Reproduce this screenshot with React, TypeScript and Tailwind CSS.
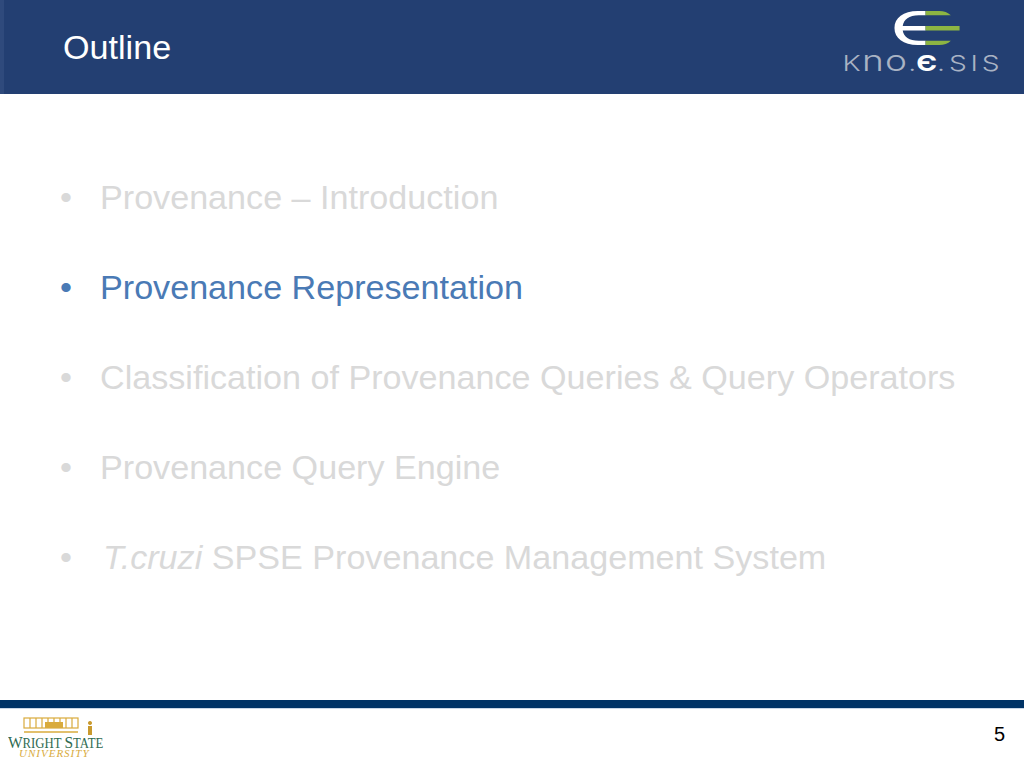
const ITEMS = [
  { label: 'Provenance – Introduction', active: false },
  { label: 'Provenance Representation', active: true },
  { label: 'Classification of Provenance Queries & Query Operators', active: false },
  { label: 'Provenance Query Engine', active: false },
]

function KnoesisMark() {
  return (
    <svg width="67" height="34" viewBox="0 0 68 35" className="block ml-[9px]">
      {/* left half of the E */}
      <path d="M32 0 H24 C9 0 0 7 0 17.5 C0 28 9 35 24 35 H32 V30.5 H25 C15 30.5 9.500 26.500 8.500 20 H32 V15.500 H8.500 C9.500 9 15 4.500 25 4.500 H32 Z" fill="#ffffff" />
      {/* right half, green */}
      <path d="M32 0 H46 C51 0 55 1.500 58 4.500 H32 Z M32 15.500 H67 V20 H32 Z M32 30.500 H58 C55 33.500 51 35 46 35 H32 Z" fill="#8db543" />
    </svg>
  )
}

function KnoesisLogo() {
  return (
    <div className="flex flex-col items-center w-[157px]">
      <KnoesisMark />
      <div className="flex items-baseline justify-center h-[20px] mt-[6px] leading-[20px] text-[#a9b3c4] font-['Inter',sans-serif] font-light whitespace-nowrap [transform:scaleX(1.28)]">
        <span className="text-[22px] tracking-[1px]">K</span>
        <span className="text-[29px] tracking-[1px]">no</span>
        <span className="text-[22px]">.</span>
        <span className="text-[22px] text-white font-bold">Є</span>
        <span className="text-[22px] tracking-[3px]">.SIS</span>
      </div>
    </div>
  )
}

function WrightLogo() {
  return (
    <div className="flex flex-col items-start w-[96px] font-['Liberation_Serif',serif]">
      <svg width="70" height="20" viewBox="0 0 70 20" className="block ml-[15px]">
        <g stroke="#d9ab3c" strokeWidth="1.2" fill="none">
          <rect x="1" y="2" width="54" height="10" />
          <path d="M7 2 V12 M13 2 V12 M19 2 V12 M25 2 V12 M31 2 V12 M37 2 V12 M43 2 V12 M49 2 V12" />
          <path d="M1 16 H55" strokeWidth="1.6" />
        </g>
        <path d="M22 6 H40 V12 H22 Z" fill="#d9ab3c" />
        <path d="M67 9 a2 2 0 1 1 .01 0 Z M65 10 H69 V19 H65 Z" fill="#c99a2e" />
      </svg>
      <div className="h-[13px] leading-[13px] text-[14px] text-[#2f6b52] whitespace-nowrap origin-left [transform:scaleX(0.91)]">
        <span className="text-[17px]">W</span>RIGHT <span className="text-[17px]">S</span>TATE
      </div>
      <div className="ml-[11px] text-[11px] leading-[9px] italic text-[#d9ab3c] tracking-[1px] whitespace-nowrap">
        UNIVERSITY
      </div>
    </div>
  )
}

function Bullet({ active, children }: { active: boolean; children: React.ReactNode }) {
  return (
    <li className={`flex h-[90px] items-center ${active ? 'text-[#4a7ab5]' : 'text-[#d9d9d9]'}`}>
      <span className="w-[41px] shrink-0 pl-[1px]">•</span>
      <span className="whitespace-nowrap">{children}</span>
    </li>
  )
}

export default function App() {
  return (
    <div className="w-[1024px] h-[768px] bg-white flex flex-col overflow-hidden font-['Liberation_Sans',sans-serif]">
      <header className="h-[94px] shrink-0 flex items-start justify-between bg-[#233f72] border-l-[4px] border-[#2f4a7c]">
        <h1 className="pl-[59px] pt-[30px] text-[34.130px] leading-none text-white">Outline</h1>
        <div className="mr-[23px] pt-[11px]">
          <KnoesisLogo />
        </div>
      </header>

      <main className="flex-1 pt-[58px] pl-[59px]">
        <ul className="text-[34.130px] leading-none">
          {ITEMS.map(item => (
            <Bullet key={item.label} active={item.active}>{item.label}</Bullet>
          ))}
          <Bullet active={false}>
            <em className="ml-[3px]">T.cruzi</em> SPSE Provenance Management System
          </Bullet>
        </ul>
      </main>

      <div className="h-[9px] shrink-0 bg-[#003366] border-b border-[#c9d6e6]" />
      <footer className="h-[59px] shrink-0 flex items-start justify-between pl-[8px] pr-[19px]">
        <div className="pt-[7px]">
          <WrightLogo />
        </div>
        <span className="pt-[15px] text-[20px] leading-none text-black">5</span>
      </footer>
    </div>
  )
}
